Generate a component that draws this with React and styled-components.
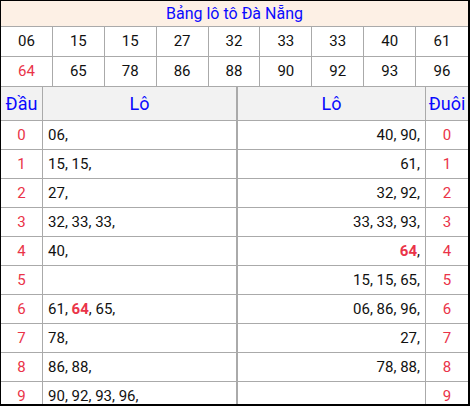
import React from 'react'
import styled, { createGlobalStyle } from 'styled-components'

const Global = createGlobalStyle`
  html, body { margin: 0; padding: 0; background: #fff; }
  body { font-family: Roboto, 'Liberation Sans', sans-serif; }
`

const line = '#aaaaaa'
const red = '#ea3348'
const blue = '#0a0aff'

const Frame = styled.div`
  box-sizing: border-box;
  width: 470px;
  height: 406px;
  overflow: hidden;
  border-style: solid;
  border-color: #000;
  border-width: 1px 2px 2px 1px;
`

const Title = styled.div`
  height: 25px;
  line-height: 25px;
  background: #fdf0e5;
  color: ${blue};
  font-size: 16px;
  text-align: center;
  border-bottom: 1px solid ${line};
`

const NumRow = styled.div`
  display: grid;
  grid-template-columns: repeat(9, 1fr);
  border-bottom: 1px solid ${line};
`

const NumCell = styled.div`
  height: 29px;
  line-height: 29px;
  text-align: center;
  font-size: 15px;
  color: ${p => (p.$hot ? red : '#111')};
  border-right: 1px solid ${line};
  &:last-child { border-right: none; }
`

const LotoRow = styled.div`
  display: grid;
  grid-template-columns: 42px 195px 188px 1fr;
  border-bottom: 1px solid ${line};
  background: ${p => (p.$head ? '#f2f2f2' : '#fff')};
`

const Cell = styled.div`
  box-sizing: border-box;
  height: ${p => (p.$head ? 33 : 28)}px;
  line-height: ${p => (p.$head ? 33 : 28)}px;
  font-size: ${p => (p.$head ? 18 : 15)}px;
  padding: 0 5px;
  white-space: nowrap;
  text-align: ${p => p.$align || 'left'};
  color: ${p => (p.$head ? blue : p.$digit ? red : '#111')};
  border-right: ${p => p.$edge || 0}px solid ${line};
  ${p => p.$head && 'padding: 0;'}
`

const Hot = styled.b`
  color: ${red};
`

const top = [
  ['06', '15', '15', '27', '32', '33', '33', '40', '61'],
  ['64', '65', '78', '86', '88', '90', '92', '93', '96'],
]

const dau = [
  ['06'], ['15', '15'], ['27'], ['32', '33', '33'], ['40'],
  [], ['61', '64', '65'], ['78'], ['86', '88'], ['90', '92', '93', '96'],
]
const duoi = [
  ['40', '90'], ['61'], ['32', '92'], ['33', '33', '93'], ['64'],
  ['15', '15', '65'], ['06', '86', '96'], ['27'], ['78', '88'], [],
]

const List = ({ items }) =>
  items.map((n, i) => (
    <React.Fragment key={i}>
      {n === '64' ? <Hot>{n}</Hot> : n}
      {', '}
    </React.Fragment>
  ))

export default function App() {
  return (
    <>
      <Global />
      <Frame>
        <Title>Bảng lô tô Đà Nẵng</Title>
        {top.map((row, r) => (
          <NumRow key={r}>
            {row.map((n, i) => (
              <NumCell key={i} $hot={n === '64'}>{n}</NumCell>
            ))}
          </NumRow>
        ))}
        <LotoRow $head>
          <Cell $head $align='center' $edge={1}>Đầu</Cell>
          <Cell $head $align='center' $edge={2}>Lô</Cell>
          <Cell $head $align='center' $edge={1}>Lô</Cell>
          <Cell $head $align='center'>Đuôi</Cell>
        </LotoRow>
        {dau.map((items, d) => (
          <LotoRow key={d}>
            <Cell $digit $align='center' $edge={1}>{d}</Cell>
            <Cell $edge={2}><List items={items} /></Cell>
            <Cell $align='right' $edge={1}><List items={duoi[d]} /></Cell>
            <Cell $digit $align='center'>{d}</Cell>
          </LotoRow>
        ))}
      </Frame>
    </>
  )
}
